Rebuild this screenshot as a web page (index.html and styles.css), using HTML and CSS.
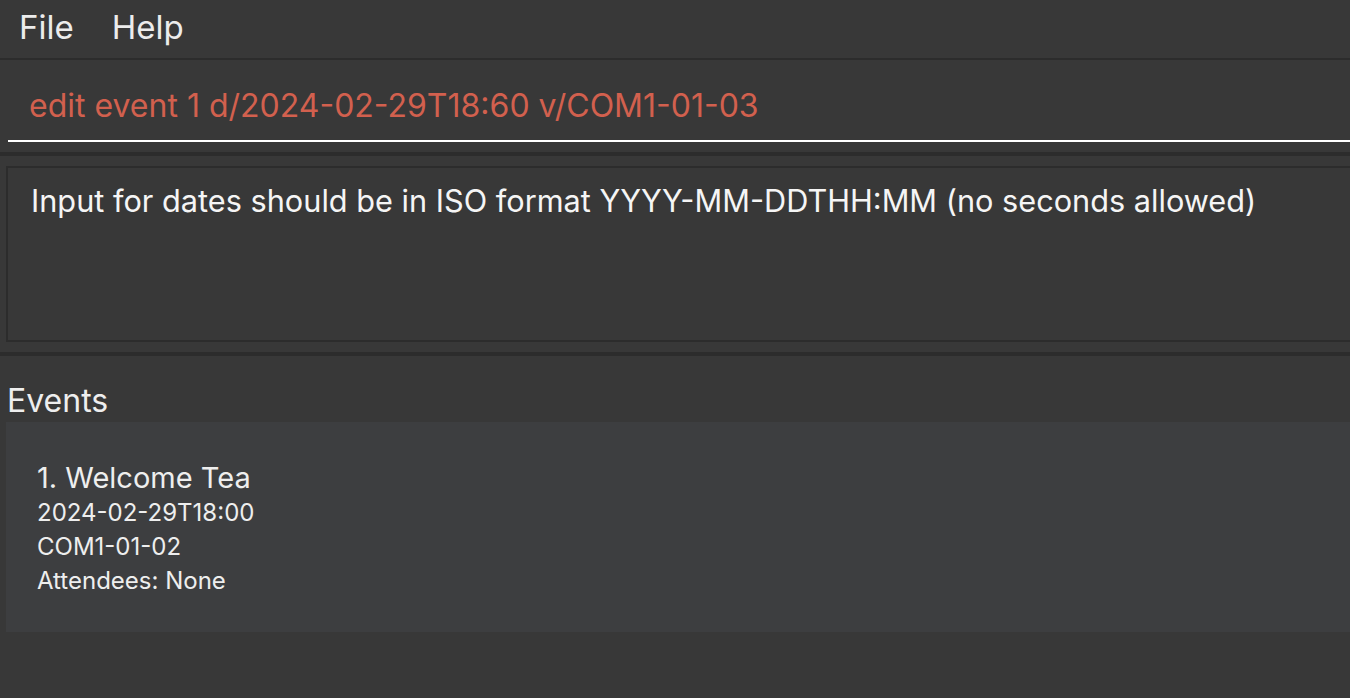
FILE: index.html
```html
<!DOCTYPE html>
<html>
<head>
<meta charset="utf-8">
<link rel="stylesheet" href="styles.css">
</head>
<body>
<div class="app">
  <div class="menubar">
    <span class="menu-item">File</span>
    <span class="menu-item">Help</span>
  </div>
  <div class="command">
    <div class="command-field">edit event 1 d/2024-02-29T18:60 v/COM1-01-03</div>
  </div>
  <div class="divider"></div>
  <div class="result-wrap">
    <div class="result-box">Input for dates should be in ISO format YYYY-MM-DDTHH:MM (no seconds allowed)</div>
  </div>
  <div class="divider"></div>
  <div class="events">
    <div class="events-title">Events</div>
    <div class="event-card">
      <div class="event-name">1. Welcome Tea</div>
      <div class="event-line">2024-02-29T18:00</div>
      <div class="event-line">COM1-01-02</div>
      <div class="event-line">Attendees: None</div>
    </div>
  </div>
</div>
</body>
</html>
```
FILE: styles.css
```css
html, body {
  margin: 0;
  padding: 0;
  background: #383838;
  font-family: Inter, "Noto Sans", sans-serif;
  color: #f2f2f2;
  overflow: hidden;
}
.app {
  width: 1350px;
  height: 698px;
  display: flex;
  flex-direction: column;
}
.menubar {
  height: 58px;
  border-bottom: 2px solid #2c2c2c;
  display: flex;
  align-items: center;
  gap: 38px;
  padding-left: 19px;
  box-sizing: content-box;
}
.menu-item {
  font-size: 33px;
  color: #ececec;
  line-height: 1;
  margin-top: -4px;
}
.command {
  height: 92px;
  padding-left: 8px;
  box-sizing: border-box;
  display: flex;
  flex-direction: column;
}
.command-field {
  margin-top: 20px;
  height: 62px;
  box-sizing: border-box;
  border-bottom: 2px solid #ffffff;
  padding-left: 21px;
  font-size: 32px;
  line-height: 52px;
  color: #d2604e;
  white-space: nowrap;
}
.divider {
  height: 4px;
  background: #2c2c2c;
}
.result-wrap {
  padding: 10px 0 10px 6px;
}
.result-box {
  height: 176px;
  box-sizing: border-box;
  border: 2px solid #2c2c2c;
  border-right: none;
  padding: 13px 0 0 23px;
  font-size: 30.7px;
  line-height: 40px;
  color: #f5f5f5;
  white-space: nowrap;
}
.events {
  padding: 24px 0 0 6px;
}
.events-title {
  font-size: 32px;
  line-height: 42px;
  margin-left: 1px;
  color: #eeeeee;
}
.event-card {
  height: 210px;
  box-sizing: border-box;
  background: #3d3e40;
  padding: 37px 0 0 31px;
  display: flex;
  flex-direction: column;
}
.event-name {
  font-size: 29px;
  line-height: 37px;
  color: #eeeeee;
}
.event-line {
  font-size: 24px;
  line-height: 34px;
  color: #eeeeee;
}
```
